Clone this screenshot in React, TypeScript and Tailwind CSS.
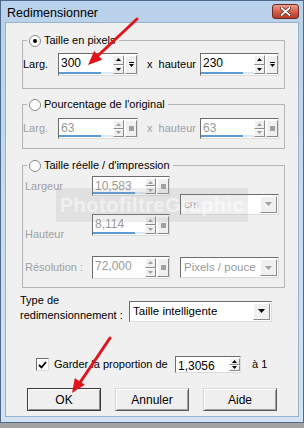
import React from "react";

function Tri({ dir, color }: { dir: "up" | "down"; color: string }) {
  return (
    <svg width="5" height="3" viewBox="0 0 5 3">
      {dir === "up" ? <path d="M0 3 L2.5 0 L5 3Z" fill={color} /> : <path d="M0 0 L5 0 L2.5 3Z" fill={color} />}
    </svg>
  );
}

function SpinBtns({ disabled }: { disabled?: boolean }) {
  const c = disabled ? "#a0a0a0" : "#000";
  return (
    <div className="flex flex-col w-[11px] py-[1px]">
      <div className="flex-1 flex items-center justify-center bg-[#f0f0f0] border border-t-white border-l-white border-r-[#8a8a8a] border-b-[#8a8a8a]">
        <Tri dir="up" color={c} />
      </div>
      <div className="flex-1 flex items-center justify-center bg-[#f0f0f0] border border-t-white border-l-white border-r-[#8a8a8a] border-b-[#8a8a8a]">
        <Tri dir="down" color={c} />
      </div>
    </div>
  );
}

function Spin({
  value,
  w,
  h,
  disabled,
  third = true,
  bar,
}: {
  value: string;
  w: string;
  h: string;
  disabled?: boolean;
  third?: boolean;
  bar?: boolean;
}) {
  return (
    <div
      className={`${w} ${h} flex bg-white border border-t-[#6d6d6d] border-l-[#6d6d6d] border-r-[#dcdcdc] border-b-[#dcdcdc]`}
    >
      <div className={`relative flex-1 pl-[2px] text-[12px] leading-[16px] pt-[1px] ${disabled ? "text-[#9a9a9a]" : "text-black"}`}>
        {value}
        {bar && (
          <div className="absolute left-0 right-0 bottom-[1px] h-[2px] bg-[#dbe8f5]">
            <div className="h-[2px] w-[42px] bg-[#5c9bd6]" />
          </div>
        )}
      </div>
      <SpinBtns disabled={disabled} />
      {third && (
        <div className="w-[12px] my-[1px] ml-[1px] flex flex-col items-center justify-center bg-[#f0f0f0] border border-t-white border-l-white border-r-[#8a8a8a] border-b-[#8a8a8a]">
          {disabled ? (
            <div className="w-[5px] h-[5px] bg-[#a0a0a0]" />
          ) : (
            <>
              <div className="w-[5px] h-[1px] bg-black mb-[1px]" />
              <Tri dir="down" color="#000" />
            </>
          )}
        </div>
      )}
    </div>
  );
}

function Select({ value, w, disabled }: { value: string; w: string; disabled?: boolean }) {
  return (
    <div
      className={`${w} h-[21px] flex bg-white border border-t-[#6d6d6d] border-l-[#6d6d6d] border-r-[#dcdcdc] border-b-[#dcdcdc]`}
    >
      <div className={`flex-1 pl-[3px] text-[11.5px] leading-[18px] whitespace-nowrap overflow-hidden ${disabled ? "text-[#9a9a9a]" : "text-black"}`}>{value}</div>
      <div className="w-[17px] m-[1px] flex items-center justify-center bg-[#f0f0f0] border border-t-white border-l-white border-r-[#8a8a8a] border-b-[#8a8a8a]">
        <svg width="7" height="4" viewBox="0 0 7 4">
          <path d="M0 0 L7 0 L3.5 4Z" fill={disabled ? "#a0a0a0" : "#000"} />
        </svg>
      </div>
    </div>
  );
}

function Radio({ checked }: { checked?: boolean }) {
  return (
    <div className="w-[12px] h-[12px] shrink-0 rounded-full bg-white border border-[#8a8a8a] flex items-center justify-center">
      {checked && <div className="w-[4px] h-[4px] rounded-full bg-black" />}
    </div>
  );
}

function Legend({ text, checked }: { text: string; checked?: boolean }) {
  return (
    <div className="absolute left-[4px] top-[-8px] h-[15px] flex items-center gap-[3px] bg-[#f0f0f0] pl-[2px] pr-[3px] text-[11px] text-black whitespace-nowrap">
      <Radio checked={checked} />
      <span>{text}</span>
    </div>
  );
}

function Btn({ label, def }: { label: string; def?: boolean }) {
  return (
    <div
      className={`w-[74px] h-[23px] flex items-center justify-center text-[12px] text-black bg-[#efefef] ${
        def
          ? "border border-[#3a3a3a] shadow-[inset_1px_1px_#ffffff,inset_-1px_-1px_#8a8a8a]"
          : "border border-t-[#d8d8d8] border-l-[#d8d8d8] border-r-[#5a5a5a] border-b-[#5a5a5a] shadow-[inset_1px_1px_#ffffff,inset_-1px_-1px_#a0a0a0]"
      }`}
    >
      {label}
    </div>
  );
}

export default function App() {
  return (
    <div className="relative w-[304px] h-[428px] bg-[#a3a3a3] font-['Liberation_Sans',Arial,sans-serif] overflow-hidden">
      <div className="h-[423px] flex flex-col border border-[#4d6a8a] bg-gradient-to-b from-[#b9d1ea] via-[#c8dcf1] to-[#d3e3f4]">
        {/* title bar */}
        <div className="h-[21px] flex items-start justify-between pl-[6px] pr-[4px]">
          <div className="text-[12.5px] text-black leading-[16px] pt-[4px]">Redimensionner</div>
          <div className="mt-[3px] w-[27px] h-[15px] rounded-[3px] border border-[#6e2a22] bg-gradient-to-b from-[#e8a090] via-[#d2614d] to-[#b83a26] flex items-center justify-center">
            <svg width="11" height="9" viewBox="0 0 11 9">
              <path d="M1.5 1 L9.5 8 M9.5 1 L1.5 8" stroke="#5a1a12" strokeWidth="3.2" strokeLinecap="round" />
              <path d="M1.5 1 L9.5 8 M9.5 1 L1.5 8" stroke="#ffffff" strokeWidth="1.8" strokeLinecap="round" />
            </svg>
          </div>
        </div>
        {/* client area */}
        <div className="mx-[4px] h-[395px] bg-[#f0f0f0] border border-[#97b0cc] flex flex-col">
          {/* group 1 */}
          <div className="relative ml-[16px] mt-[17px] w-[263px] h-[49px] border border-[#b5b5b5]">
            <Legend text="Taille en pixels" checked />
            <div className="flex items-center mt-[12px]">
              <div className="w-[35px] text-[11px] text-black">Larg.</div>
              <Spin value="300" w="w-[80px]" h="h-[23px]" bar />
              <div className="ml-[9px] w-[53px] text-[11px] text-black">
                x&nbsp; hauteur
              </div>
              <Spin value="230" w="w-[79px]" h="h-[23px]" bar />
            </div>
          </div>
          {/* group 2 */}
          <div className="relative ml-[16px] mt-[15px] w-[263px] h-[45px] border border-[#b5b5b5]">
            <Legend text="Pourcentage de l'original" checked={false} />
            <div className="flex items-center mt-[13px]">
              <div className="w-[35px] text-[11px] text-[#a0a0a0]">Larg.</div>
              <Spin value="63" w="w-[80px]" h="h-[21px]" disabled bar />
              <div className="ml-[9px] w-[53px] text-[11px] text-[#a0a0a0]">
                x&nbsp; hauteur
              </div>
              <Spin value="63" w="w-[79px]" h="h-[21px]" disabled bar />
            </div>
          </div>
          {/* group 3 */}
          <div className="relative ml-[16px] mt-[16px] w-[263px] h-[123px] border border-[#b5b5b5]">
            <Legend text="Taille réelle / d'impression" checked={false} />
            <div className="flex items-center mt-[10px]">
              <div className="flex flex-col gap-[18px]">
                <div className="flex items-center">
                  <div className="w-[69px] pl-[2px] text-[11px] text-[#a0a0a0]">Largeur</div>
                  <Spin value="10,583" w="w-[78px]" h="h-[20px]" disabled bar />
                </div>
                <div className="flex items-end">
                  <div className="w-[69px] pl-[2px] text-[11px] text-[#a0a0a0] mb-[-6px]">Hauteur</div>
                  <Spin value="8,114" w="w-[78px]" h="h-[22px]" disabled bar />
                </div>
              </div>
              <div className="ml-[10px] mt-[-4px]">
                <Select value="cm" w="w-[99px]" disabled />
              </div>
            </div>
            <div className="flex items-center mt-[20px]">
              <div className="w-[69px] pl-[2px] text-[11px] text-[#a0a0a0]">Résolution :</div>
              <Spin value="72,000" w="w-[78px]" h="h-[23px]" disabled />
              <div className="ml-[10px]">
                <Select value="Pixels / pouce" w="w-[99px]" disabled />
              </div>
            </div>
          </div>
          {/* type */}
          <div className="flex items-center ml-[14px] mt-[5px]">
            <div className="w-[109px] text-[11px] leading-[15px] text-black">
              Type de
              <br />
              redimensionnement :
            </div>
            <div className="mt-[6px]">
              <Select value="Taille intelligente" w="w-[143px]" />
            </div>
          </div>
          {/* keep ratio */}
          <div className="flex items-center ml-[30px] mt-[33px]">
            <div className="w-[13px] h-[13px] bg-white border border-t-[#6d6d6d] border-l-[#6d6d6d] border-r-[#dcdcdc] border-b-[#dcdcdc] flex items-center justify-center">
              <svg width="9" height="8" viewBox="0 0 9 8">
                <path d="M1 4 L3.5 6.5 L8 1" stroke="#000" strokeWidth="1.8" fill="none" />
              </svg>
            </div>
            <div className="ml-[5px] w-[121px] text-[11px] text-black">Garder la proportion de</div>
            <Spin value="1,3056" w="w-[66px]" h="h-[17px]" third={false} />
            <div className="ml-[11px] text-[11px] text-black">à 1</div>
          </div>
          {/* buttons */}
          <div className="flex items-center ml-[21px] mt-[15px] gap-[14px]">
            <Btn label="OK" def />
            <Btn label="Annuler" />
            <Btn label="Aide" />
          </div>
        </div>
      </div>

      {/* watermark */}
      <div className="absolute left-[56px] top-[188px] w-[192px] h-[34px] bg-[rgba(150,150,150,0.16)] flex items-center justify-center pointer-events-none">
        <span className="text-[20px] font-bold text-[rgba(255,255,255,0.55)] tracking-[0.5px]">PhotofiltreGraphic</span>
      </div>

      {/* red arrows */}
      <svg className="absolute left-0 top-0 pointer-events-none" width="304" height="428" viewBox="0 0 304 428">
        <line x1="137" y1="19" x2="96" y2="57.5" stroke="#e0141c" strokeWidth="3" strokeLinecap="round" />
        <polygon points="88,65 102.3,59.8 94.1,51.0" fill="#e0141c" />
        <line x1="110" y1="338" x2="79" y2="384" stroke="#e0141c" strokeWidth="3" strokeLinecap="round" />
        <polygon points="72,393 84.8,384.7 74.8,378.1" fill="#e0141c" />
      </svg>
    </div>
  );
}
